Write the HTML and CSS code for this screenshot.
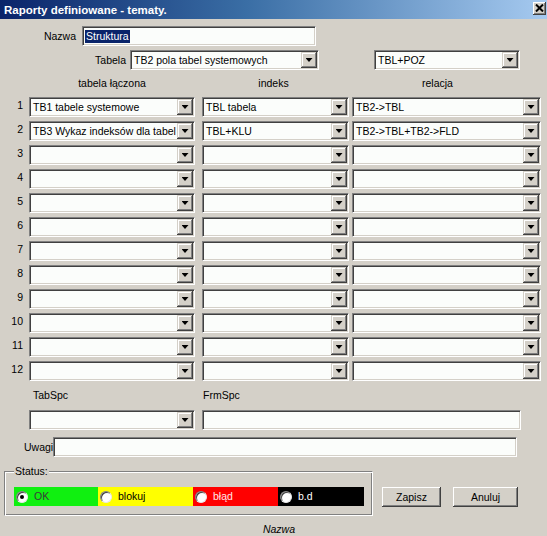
FILE: index.html
```html
<!DOCTYPE html>
<html lang="pl">
<head>
<meta charset="utf-8">
<title>Raporty definiowane - tematy.</title>
<link rel="stylesheet" href="styles.css">
</head>
<body>
<div class="window">
  <div class="titlebar">
    <span class="title">Raporty definiowane - tematy.</span>
    <span class="close"><svg width="9" height="8" viewBox="0 0 9 8"><path d="M1 0.5 L8 7.5 M8 0.5 L1 7.5" stroke="#000" stroke-width="2"/></svg></span>
  </div>

  <div class="line line-nazwa">
    <span class="lbl lbl-nazwa">Nazwa</span>
    <div class="edit w-nazwa"><span class="selected">Struktura</span></div>
  </div>

  <div class="line line-tabela">
    <span class="lbl lbl-tabela">Tabela</span>
    <div class="combo w-tabela"><span class="val">TB2 pola tabel systemowych</span><span class="btn"></span></div>
    <div class="combo w-poz"><span class="val">TBL+POZ</span><span class="btn"></span></div>
  </div>

  <div class="grid">
    <span class="head h1 c1">tabela łączona</span>
    <span class="head h2 c2">indeks</span>
    <span class="head h3 c3">relacja</span>

    <span class="num">1</span>
    <div class="combo c1"><span class="val">TB1 tabele systemowe</span><span class="btn"></span></div>
    <div class="combo c2"><span class="val">TBL tabela</span><span class="btn"></span></div>
    <div class="combo c3"><span class="val">TB2-&gt;TBL</span><span class="btn"></span></div>

    <span class="num">2</span>
    <div class="combo c1"><span class="val">TB3 Wykaz indeksów dla tabel</span><span class="btn"></span></div>
    <div class="combo c2"><span class="val">TBL+KLU</span><span class="btn"></span></div>
    <div class="combo c3"><span class="val">TB2-&gt;TBL+TB2-&gt;FLD</span><span class="btn"></span></div>

    <span class="num">3</span>
    <div class="combo c1"><span class="val"></span><span class="btn"></span></div>
    <div class="combo c2"><span class="val"></span><span class="btn"></span></div>
    <div class="combo c3"><span class="val"></span><span class="btn"></span></div>

    <span class="num">4</span>
    <div class="combo c1"><span class="val"></span><span class="btn"></span></div>
    <div class="combo c2"><span class="val"></span><span class="btn"></span></div>
    <div class="combo c3"><span class="val"></span><span class="btn"></span></div>

    <span class="num">5</span>
    <div class="combo c1"><span class="val"></span><span class="btn"></span></div>
    <div class="combo c2"><span class="val"></span><span class="btn"></span></div>
    <div class="combo c3"><span class="val"></span><span class="btn"></span></div>

    <span class="num">6</span>
    <div class="combo c1"><span class="val"></span><span class="btn"></span></div>
    <div class="combo c2"><span class="val"></span><span class="btn"></span></div>
    <div class="combo c3"><span class="val"></span><span class="btn"></span></div>

    <span class="num">7</span>
    <div class="combo c1"><span class="val"></span><span class="btn"></span></div>
    <div class="combo c2"><span class="val"></span><span class="btn"></span></div>
    <div class="combo c3"><span class="val"></span><span class="btn"></span></div>

    <span class="num">8</span>
    <div class="combo c1"><span class="val"></span><span class="btn"></span></div>
    <div class="combo c2"><span class="val"></span><span class="btn"></span></div>
    <div class="combo c3"><span class="val"></span><span class="btn"></span></div>

    <span class="num">9</span>
    <div class="combo c1"><span class="val"></span><span class="btn"></span></div>
    <div class="combo c2"><span class="val"></span><span class="btn"></span></div>
    <div class="combo c3"><span class="val"></span><span class="btn"></span></div>

    <span class="num">10</span>
    <div class="combo c1"><span class="val"></span><span class="btn"></span></div>
    <div class="combo c2"><span class="val"></span><span class="btn"></span></div>
    <div class="combo c3"><span class="val"></span><span class="btn"></span></div>

    <span class="num">11</span>
    <div class="combo c1"><span class="val"></span><span class="btn"></span></div>
    <div class="combo c2"><span class="val"></span><span class="btn"></span></div>
    <div class="combo c3"><span class="val"></span><span class="btn"></span></div>

    <span class="num">12</span>
    <div class="combo c1"><span class="val"></span><span class="btn"></span></div>
    <div class="combo c2"><span class="val"></span><span class="btn"></span></div>
    <div class="combo c3"><span class="val"></span><span class="btn"></span></div>
  </div>

  <div class="spc">
    <span class="spc-lbl c1">TabSpc</span>
    <span class="spc-lbl c2">FrmSpc</span>
    <div class="combo c1"><span class="val"></span><span class="btn"></span></div>
    <div class="edit frm"></div>
  </div>

  <div class="line line-uwagi">
    <span class="lbl lbl-uwagi">Uwagi</span>
    <div class="edit w-uwagi"></div>
  </div>

  <div class="bottom">
    <div class="group">
      <span class="legend">Status:</span>
      <div class="strip">
        <div class="seg seg-ok"><span class="radio checked"></span><span class="st">OK</span></div>
        <div class="seg seg-blok"><span class="radio"></span><span class="st">blokuj</span></div>
        <div class="seg seg-blad"><span class="radio"></span><span class="st">błąd</span></div>
        <div class="seg seg-bd"><span class="radio"></span><span class="st">b.d</span></div>
      </div>
    </div>
    <div class="buttons">
      <span class="button b-zapisz">Zapisz</span>
      <span class="button b-anuluj">Anuluj</span>
    </div>
  </div>

  <div class="footer">Nazwa</div>
</div>
</body>
</html>
```

FILE: styles.css
```css
html, body {
  margin: 0;
  padding: 0;
  background: #d4d0c8;
}

.window {
  width: 547px;
  height: 536px;
  background: #d4d0c8;
  font-family: "Liberation Sans", Arial, sans-serif;
  font-size: 10.5px;
  color: #000;
  display: flex;
  flex-direction: column;
  overflow: hidden;
}

.titlebar {
  height: 19px;
  flex: none;
  background: linear-gradient(to right, #0a246a 0%, #3a6ea5 45%, #a6caf0 100%);
  display: flex;
  align-items: center;
  justify-content: space-between;
}

.title {
  color: #fff;
  font-weight: bold;
  font-size: 11.5px;
  padding-left: 4px;
  padding-top: 1px;
}

.close {
  width: 13px;
  height: 13px;
  margin-right: 1px;
  margin-bottom: 3px;
  background: #d4d0c8;
  box-shadow: inset -1px -1px #404040, inset 1px 1px #fff, inset -2px -2px #808080;
  display: flex;
  align-items: center;
  justify-content: center;
}

.line {
  display: flex;
  align-items: center;
  flex: none;
}

.lbl {
  text-align: right;
}

.line-nazwa { margin-top: 7px; }
.lbl-nazwa { width: 76px; margin-right: 6px; }
.w-nazwa { width: 234px; }

.line-tabela { margin-top: 4px; }
.lbl-tabela { width: 126px; margin-right: 4px; }
.w-tabela { width: 189px; }
.w-poz { width: 146px; margin-left: 55px; }

.edit {
  height: 20px;
  box-sizing: border-box;
  border: 1px solid;
  border-color: #808080 #fff #fff #808080;
  box-shadow: inset 1px 1px #404040, inset -1px -1px #d4d0c8;
  background: #fbfdfb;
  padding: 2px 2px 0 2px;
  line-height: 15px;
  white-space: nowrap;
}

.selected {
  background: #0a246a;
  color: #fff;
  padding: 0 1px 1px 1px;
}

.combo {
  height: 20px;
  box-sizing: border-box;
  border: 1px solid;
  border-color: #808080 #fff #fff #808080;
  box-shadow: inset 1px 1px #404040, inset -1px -1px #d4d0c8;
  background: #fbfdfb;
  padding: 1px;
  display: flex;
}

.val {
  flex: 1;
  min-width: 0;
  overflow: hidden;
  white-space: nowrap;
  line-height: 17px;
  padding-left: 2px;
}

.btn {
  flex: none;
  width: 16px;
  height: 16px;
  background: #d4d0c8;
  box-shadow: inset -1px -1px #404040, inset 1px 1px #d4d0c8, inset -2px -2px #808080, inset 2px 2px #fff;
  display: flex;
  align-items: center;
  justify-content: center;
}

.btn::after {
  content: "";
  width: 7px;
  height: 4px;
  background: #000;
  clip-path: polygon(0 0, 100% 0, 50% 100%);
}

.grid {
  display: grid;
  grid-template-columns: 29px 166px 154px 192px;
  grid-template-rows: 23px;
  grid-auto-rows: 20px;
  row-gap: 4px;
  flex: none;
}

.grid .c2, .spc .c2 { margin-left: 7px; }
.grid .c3 { margin-left: 3px; }

.head {
  height: 23px;
  line-height: 27px;
  text-align: center;
}
.h1 { grid-column: 2; }
.h2 { grid-column: 3; padding-right: 4px; }
.h3 { grid-column: 4; padding-right: 18px; }

.num {
  grid-column: 1;
  text-align: right;
  padding-right: 6px;
  line-height: 16px;
}

.spc {
  display: grid;
  grid-template-columns: 29px 166px 346px;
  grid-template-rows: 29px 20px;
  flex: none;
}

.spc-lbl {
  line-height: 29px;
}
.spc-lbl.c1 { grid-column: 2; padding-left: 4px; }
.spc-lbl.c2 { grid-column: 3; padding-left: 1px; }
.spc .combo.c1 { grid-column: 2; }
.spc .frm { grid-column: 3; margin-left: 7px; width: 319px; }

.line-uwagi { margin-top: 7px; }
.lbl-uwagi { margin-left: 24px; width: 29px; text-align: left; }
.w-uwagi { width: 464px; }

.bottom {
  display: flex;
  align-items: flex-start;
  margin-top: 14px;
  flex: none;
}

.group {
  position: relative;
  margin-left: 4px;
  width: 369px;
  height: 45px;
  box-sizing: border-box;
  border: 1px solid;
  border-color: #808080 #fff #fff #808080;
  box-shadow: inset 1px 1px #fff, inset -1px -1px #808080;
  padding: 15px 0 0 9px;
}

.legend {
  position: absolute;
  left: 9px;
  top: -7px;
  background: #d4d0c8;
  padding: 0 1px;
  line-height: 13px;
}

.strip {
  display: flex;
  height: 19px;
  width: 350px;
}

.seg {
  display: flex;
  align-items: center;
  padding-left: 2px;
  box-sizing: border-box;
}
.seg-ok { width: 84px; background: #10f010; color: #3a3a3a; }
.seg-blok { width: 95px; background: #ffff00; color: #000; }
.seg-blad { width: 85px; background: #ff0000; color: #ffe8e8; }
.seg-bd { width: 86px; background: #000; color: #fff; }

.radio {
  width: 12px;
  height: 12px;
  box-sizing: border-box;
  border-radius: 50%;
  border: 1px solid;
  border-color: #808080 #e8e8e8 #e8e8e8 #808080;
  box-shadow: inset 1px 1px #404040;
  background: #fff;
  display: flex;
  align-items: center;
  justify-content: center;
  flex: none;
}
.radio.checked::after {
  content: "";
  width: 4px;
  height: 4px;
  border-radius: 50%;
  background: #000;
}

.st {
  margin-left: 6px;
  line-height: 19px;
}

.buttons {
  display: flex;
  gap: 12px;
  margin-left: 9px;
  margin-top: 16px;
}

.button {
  height: 20px;
  line-height: 20px;
  text-align: center;
  background: #d4d0c8;
  box-shadow: inset -1px -1px #404040, inset 1px 1px #fff, inset -2px -2px #808080, inset 2px 2px #d4d0c8;
}
.b-zapisz { width: 59px; }
.b-anuluj { width: 65px; }

.footer {
  margin-top: 7px;
  line-height: 13px;
  text-align: center;
  font-style: italic;
  padding-left: 11px;
  flex: none;
}
```
